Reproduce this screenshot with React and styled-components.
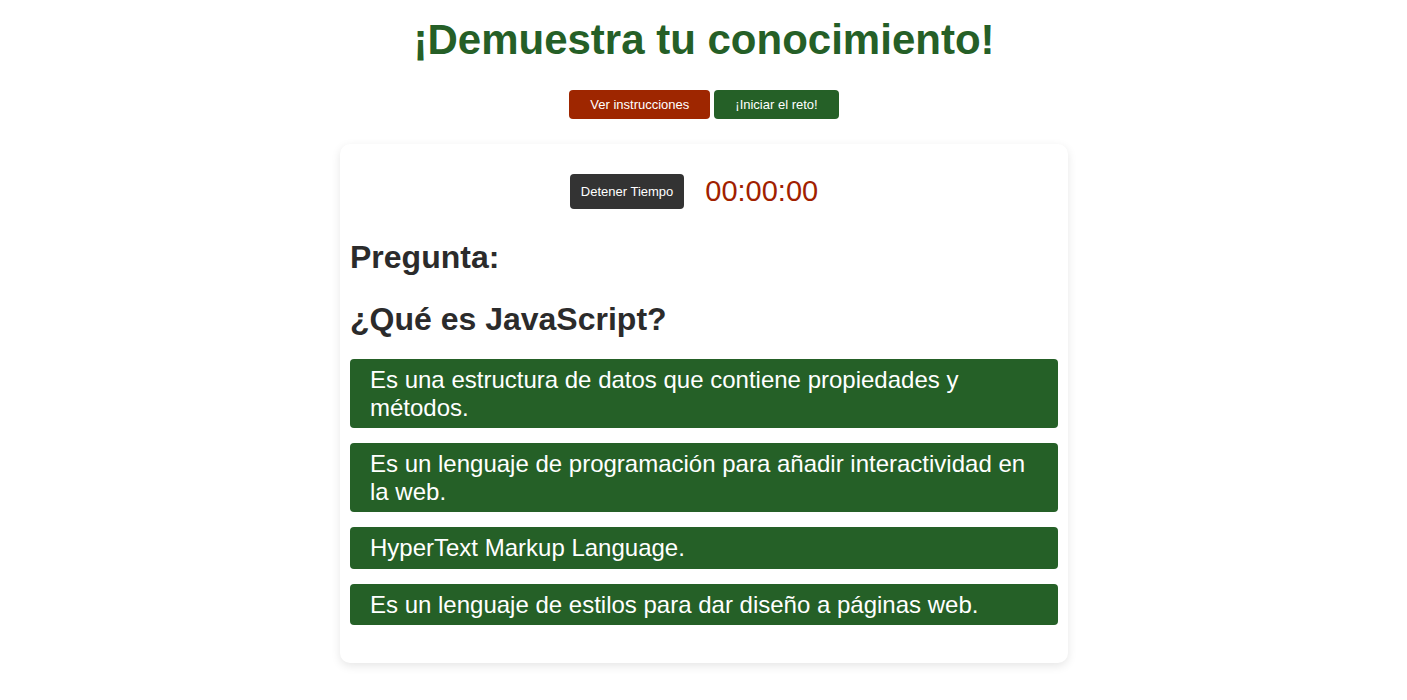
import { createGlobalStyle, styled } from "styled-components";

const GlobalStyle = createGlobalStyle`
  body {
    margin: 0;
    background: #ffffff;
    font-family: "Liberation Sans", Arial, sans-serif;
  }
`;

const Page = styled.div`
  display: flex;
  flex-direction: column;
  align-items: center;
  padding: 16px 0 30px 1px;
`;

const Title = styled.h1`
  margin: 0;
  font-size: 42px;
  font-weight: 700;
  color: #255f27;
`;

const Actions = styled.div`
  display: flex;
  gap: 4px;
  margin-top: 26px;
`;

const Button = styled.button`
  font-family: "Liberation Sans", Arial, sans-serif;
  font-size: 13px;
  line-height: 15px;
  color: #ffffff;
  background: ${(p) => p.$bg};
  border: none;
  border-radius: 4px;
  padding: ${(p) => p.$pad};
  cursor: pointer;
`;

const Card = styled.div`
  width: 728px;
  box-sizing: border-box;
  margin-top: 25px;
  padding: 30px 10px 38px;
  background: #ffffff;
  border-radius: 10px;
  box-shadow: 0 3px 10px rgba(0, 0, 0, 0.1);
`;

const TimerRow = styled.div`
  display: flex;
  justify-content: center;
  align-items: center;
`;

const Timer = styled.span`
  margin: 0 20px 0 21px;
  font-size: 29px;
  color: #a11f00;
`;

const Heading = styled.h2`
  margin: ${(p) => p.$top} 0 0;
  font-size: 32px;
  font-weight: 700;
  color: #2b2b2b;
`;

const Answers = styled.div`
  display: flex;
  flex-direction: column;
  gap: 15px;
  margin-top: 21px;
`;

const Answer = styled.div`
  background: #256027;
  color: #ffffff;
  font-size: 24px;
  line-height: 27.5px;
  padding: 7px 20px;
  border-radius: 4px;
`;

const answers = [
  "Es una estructura de datos que contiene propiedades y métodos.",
  "Es un lenguaje de programación para añadir interactividad en la web.",
  "HyperText Markup Language.",
  "Es un lenguaje de estilos para dar diseño a páginas web.",
];

export default function App() {
  return (
    <>
      <GlobalStyle />
      <Page>
        <Title>¡Demuestra tu conocimiento!</Title>
        <Actions>
          <Button $bg="#9e2600" $pad="7px 21px">Ver instrucciones</Button>
          <Button $bg="#256027" $pad="7px 21px">¡Iniciar el reto!</Button>
        </Actions>
        <Card>
          <TimerRow>
            <Button $bg="#333333" $pad="10px 11px">Detener Tiempo</Button>
            <Timer>00:00:00</Timer>
          </TimerRow>
          <Heading $top="30px">Pregunta:</Heading>
          <Heading $top="25px">¿Qué es JavaScript?</Heading>
          <Answers>
            {answers.map((a) => (
              <Answer key={a}>{a}</Answer>
            ))}
          </Answers>
        </Card>
      </Page>
    </>
  );
}
